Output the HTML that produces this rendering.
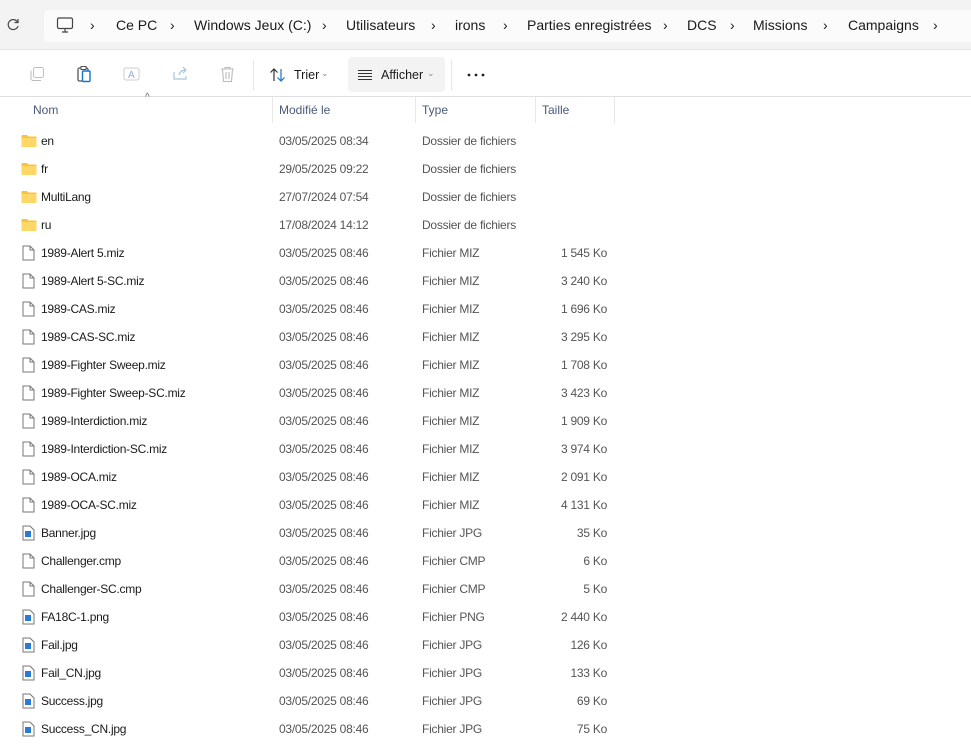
<!DOCTYPE html>
<html><head><meta charset="utf-8"><style>
*{margin:0;padding:0;box-sizing:border-box}
body{width:971px;height:750px;overflow:hidden;background:#fff;font-family:"Segoe UI","Liberation Sans",sans-serif;font-size:12px;color:#1a1a1a;position:relative}
.top{position:absolute;left:0;top:0;width:971px;height:50px;background:#f3f3f3;border-bottom:1px solid #e5e5e5}
.addr{position:absolute;left:44px;top:10px;width:940px;height:32px;background:#fbfbfb;border-radius:4px}
.crumb{position:absolute;top:17px;font-size:14px;color:#1a1a1a;white-space:nowrap}
.tb{position:absolute;left:0;top:50px;width:971px;height:47px;background:#fff;border-bottom:1px solid #e0e0e0}
.abs{position:absolute}
.hdr{position:absolute;top:103px;font-size:12px;color:#4a5a7a}
.sep{position:absolute;top:97px;width:1px;height:26px;background:#e8e8e8}
.row{position:absolute;left:0;width:971px;height:28px;font-size:12px;letter-spacing:-0.25px}
.row span{position:absolute;top:6px;white-space:nowrap}
.n{left:41px;color:#1a1a1a}.d{left:279px;color:#555}.t{left:422px;color:#555}.s{right:364px;color:#555}
.ic{position:absolute;left:21px;top:6px}
</style></head><body>
<div class="top"></div>
<div class="addr"></div>
<svg class="abs" style="left:6px;top:18px" width="14" height="14" viewBox="0 0 14 14"><path d="M11.5 4A5 5 0 1 0 12 8" fill="none" stroke="#444" stroke-width="1.2"/><path d="M12 1v3.5H8.5" fill="none" stroke="#444" stroke-width="1.2"/></svg>
<svg class="abs" style="left:56px;top:16px" width="18" height="18" viewBox="0 0 18 18"><rect x="1.5" y="2" width="15" height="10.5" rx="1.5" fill="none" stroke="#444" stroke-width="1.2"/><path d="M6 16h6M9 12.5v3.5" stroke="#444" stroke-width="1.2"/></svg>
<div class="crumb" style="left:90px">›</div>
<div class="crumb" style="left:116px">Ce PC</div>
<div class="crumb" style="left:170px">›</div>
<div class="crumb" style="left:194px">Windows Jeux (C:)</div>
<div class="crumb" style="left:322px">›</div>
<div class="crumb" style="left:346px">Utilisateurs</div>
<div class="crumb" style="left:431px">›</div>
<div class="crumb" style="left:455px">irons</div>
<div class="crumb" style="left:503px">›</div>
<div class="crumb" style="left:527px">Parties enregistrées</div>
<div class="crumb" style="left:663px">›</div>
<div class="crumb" style="left:687px">DCS</div>
<div class="crumb" style="left:730px">›</div>
<div class="crumb" style="left:753px">Missions</div>
<div class="crumb" style="left:823px">›</div>
<div class="crumb" style="left:848px">Campaigns</div>
<div class="crumb" style="left:933px">›</div>
<div class="tb"></div>
<svg class="abs" style="left:29px;top:66px" width="16" height="16" viewBox="0 0 16 16"><rect x="4.5" y="1.5" width="10" height="10" rx="2" fill="none" stroke="#a8c4e0"/><path d="M2 4.5v8a2 2 0 0 0 2 2h8" fill="none" stroke="#bbb"/></svg>
<svg class="abs" style="left:76px;top:65px" width="18" height="18" viewBox="0 0 18 18"><rect x="2" y="3" width="10" height="13" rx="1.5" fill="none" stroke="#555" stroke-width="1.3"/><rect x="6.5" y="6" width="7.5" height="10.5" rx="1" fill="#fff" stroke="#1a73c8" stroke-width="1.4"/><rect x="5" y="1.5" width="5" height="3" fill="#fff" stroke="#555"/></svg>
<svg class="abs" style="left:123px;top:66px" width="18" height="16" viewBox="0 0 18 16"><rect x="1" y="2" width="15" height="12" rx="2" fill="none" stroke="#ccc"/><text x="5" y="12" font-size="10" fill="#8ab0d8" font-family="Liberation Sans">A</text></svg>
<svg class="abs" style="left:172px;top:66px" width="17" height="16" viewBox="0 0 17 16"><path d="M2 6v7h12V10M7 9c1-4 4-5 7-5M11 1l3 3-3 3" fill="none" stroke="#a8c4e0" stroke-width="1.2"/></svg>
<svg class="abs" style="left:220px;top:66px" width="15" height="17" viewBox="0 0 15 17"><path d="M1 3h13M5 3V1.5h5V3M2.5 3l1 12.5h8l1-12.5M6 6v7M9 6v7" fill="none" stroke="#bbb" stroke-width="1.1"/></svg>
<div class="abs" style="left:253px;top:60px;width:1px;height:30px;background:#e5e5e5"></div>
<svg class="abs" style="left:269px;top:67px" width="18" height="16" viewBox="0 0 18 16"><path d="M5 14V2M1.5 5.5L5 2l3.5 3.5" fill="none" stroke="#333" stroke-width="1.2"/><path d="M12 2v12M8.5 10.5L12 14l3.5-3.5" fill="none" stroke="#1a73c8" stroke-width="1.2"/></svg>
<div class="abs" style="left:294px;top:68px;font-size:12.5px">Trier</div>
<div class="abs" style="left:321px;top:68px;font-size:9px;color:#888">⌄</div>
<div class="abs" style="left:348px;top:57px;width:97px;height:35px;background:#f3f3f3;border-radius:4px"></div>
<svg class="abs" style="left:357px;top:69px" width="16" height="12" viewBox="0 0 16 12"><path d="M1 1.5h14M1 4.5h14M1 7.5h14M1 10.5h14" stroke="#333" stroke-width="1"/></svg>
<div class="abs" style="left:381px;top:68px;font-size:12.5px">Afficher</div>
<div class="abs" style="left:427px;top:68px;font-size:9px;color:#888">⌄</div>
<div class="abs" style="left:451px;top:60px;width:1px;height:30px;background:#e5e5e5"></div>
<svg class="abs" style="left:466px;top:73px" width="20" height="4" viewBox="0 0 20 4"><circle cx="3" cy="2" r="1.4" fill="#222"/><circle cx="10" cy="2" r="1.4" fill="#222"/><circle cx="17" cy="2" r="1.4" fill="#222"/></svg>
<div class="abs" style="left:145px;top:92px;font-size:10px;color:#666">^</div>
<div class="hdr" style="left:33px">Nom</div>
<div class="hdr" style="left:279px">Modifié le</div>
<div class="hdr" style="left:422px">Type</div>
<div class="hdr" style="left:542px">Taille</div>
<div class="sep" style="left:272px"></div><div class="sep" style="left:415px"></div><div class="sep" style="left:535px"></div><div class="sep" style="left:614px"></div>
<div id="rows"></div>
<script>
const F='<svg class="ic" width="16" height="14" viewBox="0 0 16 14"><path d="M0.5 2a1 1 0 0 1 1-1h4.5l1.5 1.5h7a1 1 0 0 1 1 1V12a1 1 0 0 1-1 1h-13a1 1 0 0 1-1-1z" fill="#f8c43a"/><path d="M0.5 4h15V12a1 1 0 0 1-1 1h-13a1 1 0 0 1-1-1z" fill="#ffd766"/></svg>';
const D='<svg class="ic" style="left:22px;top:5px" width="13" height="16" viewBox="0 0 13 16"><path d="M1 1h7l4 4v10H1z" fill="#fff" stroke="#777"/><path d="M8 1v4h4" fill="none" stroke="#777"/></svg>';
const I='<svg class="ic" style="left:22px;top:5px" width="13" height="16" viewBox="0 0 13 16"><path d="M1 1h7l4 4v10H1z" fill="#fff" stroke="#777"/><rect x="3" y="6" width="6" height="6" fill="#2b7ad8"/></svg>';
const r=[["en","03/05/2025 08:34","Dossier de fichiers","",F],["fr","29/05/2025 09:22","Dossier de fichiers","",F],["MultiLang","27/07/2024 07:54","Dossier de fichiers","",F],["ru","17/08/2024 14:12","Dossier de fichiers","",F],
["1989-Alert 5.miz","03/05/2025 08:46","Fichier MIZ","1 545 Ko",D],["1989-Alert 5-SC.miz","03/05/2025 08:46","Fichier MIZ","3 240 Ko",D],["1989-CAS.miz","03/05/2025 08:46","Fichier MIZ","1 696 Ko",D],["1989-CAS-SC.miz","03/05/2025 08:46","Fichier MIZ","3 295 Ko",D],["1989-Fighter Sweep.miz","03/05/2025 08:46","Fichier MIZ","1 708 Ko",D],["1989-Fighter Sweep-SC.miz","03/05/2025 08:46","Fichier MIZ","3 423 Ko",D],["1989-Interdiction.miz","03/05/2025 08:46","Fichier MIZ","1 909 Ko",D],["1989-Interdiction-SC.miz","03/05/2025 08:46","Fichier MIZ","3 974 Ko",D],["1989-OCA.miz","03/05/2025 08:46","Fichier MIZ","2 091 Ko",D],["1989-OCA-SC.miz","03/05/2025 08:46","Fichier MIZ","4 131 Ko",D],
["Banner.jpg","03/05/2025 08:46","Fichier JPG","35 Ko",I],["Challenger.cmp","03/05/2025 08:46","Fichier CMP","6 Ko",D],["Challenger-SC.cmp","03/05/2025 08:46","Fichier CMP","5 Ko",D],["FA18C-1.png","03/05/2025 08:46","Fichier PNG","2 440 Ko",I],["Fail.jpg","03/05/2025 08:46","Fichier JPG","126 Ko",I],["Fail_CN.jpg","03/05/2025 08:46","Fichier JPG","133 Ko",I],["Success.jpg","03/05/2025 08:46","Fichier JPG","69 Ko",I],["Success_CN.jpg","03/05/2025 08:46","Fichier JPG","75 Ko",I]];
let h='';r.forEach((x,i)=>{h+=`<div class="row" style="top:${128+28*i}px">${x[4]}<span class="n">${x[0]}</span><span class="d">${x[1]}</span><span class="t">${x[2]}</span><span class="s">${x[3]}</span></div>`});
document.getElementById('rows').innerHTML=h;
</script>
</body></html>
